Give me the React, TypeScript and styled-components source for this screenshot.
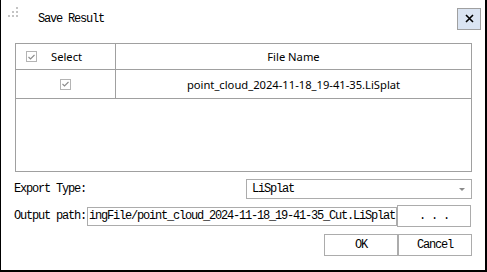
import React from 'react'
import styled, {createGlobalStyle} from 'styled-components'

const GlobalStyle = createGlobalStyle`
  html, body {
    margin: 0;
    padding: 0;
    background: #ffffff;
  }
`

const mono = `"Liberation Mono", "DejaVu Sans Mono", monospace`
const sans = `"Noto Sans", "Open Sans", Arial, sans-serif`

const Dialog = styled.div`
  box-sizing: border-box;
  width: 487px;
  height: 272px;
  background: #fff;
  border-left: 1px solid #000;
  border-right: 2px solid #000;
  border-bottom: 2px solid #000;
  display: flex;
  flex-direction: column;
  font-family: ${mono};
  font-size: 12px;
  letter-spacing: -1.2px;
  color: #000;
`

const TitleBar = styled.div`
  height: 37px;
  display: flex;
  align-items: center;
  padding: 0 4px 0 6px;
`

const Grip = styled.svg`
  width: 12px;
  height: 12px;
  margin-top: -13px;
  flex-shrink: 0;
`

const Title = styled.span`
  margin-left: 19px;
  flex: 1;
`

const CloseButton = styled.div`
  box-sizing: border-box;
  width: 24px;
  height: 22px;
  background: #dae4f2;
  border: 1px solid #a0a0a0;
  display: flex;
  align-items: center;
  justify-content: center;
`

const Body = styled.div`
  flex: 1;
  display: flex;
  flex-direction: column;
  padding: 6px 13px 0 13px;
`

const Table = styled.div`
  box-sizing: border-box;
  margin-left: 1px;
  height: 129px;
  border: 1px solid #a0a0a0;
  background: #fff;
  font-family: ${sans};
  font-size: 11.2px;
  letter-spacing: 0;
  color: #000;
`

const Row = styled.div<{$h: number}>`
  display: grid;
  grid-template-columns: 100px 1fr;
  height: ${p => p.$h}px;
  border-bottom: 1px solid #a0a0a0;
`

const Cell = styled.div<{$left?: boolean}>`
  display: flex;
  align-items: center;
  justify-content: ${p => (p.$left ? 'flex-start' : 'center')};
  padding-left: ${p => (p.$left ? '10px' : '0')};
  gap: 14px;
  border-right: 1px solid #a0a0a0;
  &:last-child {
    border-right: none;
  }
`

const Box = styled.span`
  box-sizing: border-box;
  width: 11px;
  height: 11px;
  border: 1px solid #b4b4b4;
  background: #fff;
  display: inline-flex;
  align-items: center;
  justify-content: center;
`

const FormRow = styled.div<{$mt: number}>`
  display: flex;
  align-items: center;
  margin-top: ${p => p.$mt}px;
`

const Label = styled.span`
  white-space: nowrap;
`

const Select = styled.div`
  box-sizing: border-box;
  margin-left: auto;
  width: 226px;
  height: 20px;
  border: 1px solid #acacac;
  display: flex;
  align-items: center;
  justify-content: space-between;
  padding: 0 6px 0 5px;
`

const Arrow = styled.span`
  width: 0;
  height: 0;
  border-left: 3px solid transparent;
  border-right: 3px solid transparent;
  border-top: 3px solid #8a8a8a;
`

const PathInput = styled.div`
  box-sizing: border-box;
  margin-left: 1px;
  width: 310px;
  height: 19px;
  border: 1px solid #acacac;
  display: flex;
  align-items: center;
  padding-left: 1px;
  white-space: nowrap;
  overflow: hidden;
`

const Button = styled.div`
  box-sizing: border-box;
  width: 74px;
  height: 22px;
  border: 1px solid #acacac;
  background: #fff;
  display: flex;
  align-items: center;
  justify-content: center;
`

const Buttons = styled.div`
  display: flex;
  justify-content: flex-end;
  margin-top: 7px;
`

function Check() {
  return (
    <svg width="7" height="6" viewBox="0 0 7 6">
      <path d="M0.5 3 L2.5 5 L6.5 1" fill="none" stroke="#8c8c8c" strokeWidth="1.1" />
    </svg>
  )
}

function CheckBox() {
  return (
    <Box>
      <Check />
    </Box>
  )
}

export default function App() {
  return (
    <>
      <GlobalStyle />
      <Dialog>
        <TitleBar>
          <Grip viewBox="0 0 12 12">
            {[
              [9, 1],
              [9, 5],
              [5, 5],
              [1, 9],
              [5, 9],
              [9, 9],
            ].map(([x, y], i) => (
              <rect key={i} x={x} y={y} width="2" height="2" fill="#c4c4c4" />
            ))}
          </Grip>
          <Title>Save Result</Title>
          <CloseButton>
            <svg width="9" height="9" viewBox="0 0 9 9">
              <path d="M1 1 L8 8 M8 1 L1 8" stroke="#000" strokeWidth="1.6" />
            </svg>
          </CloseButton>
        </TitleBar>
        <Body>
          <Table>
            <Row $h={25}>
              <Cell $left>
                <CheckBox />
                <span>Select</span>
              </Cell>
              <Cell>File Name</Cell>
            </Row>
            <Row $h={28}>
              <Cell>
                <CheckBox />
              </Cell>
              <Cell>point_cloud_2024-11-18_19-41-35.LiSplat</Cell>
            </Row>
          </Table>
          <FormRow $mt={7}>
            <Label>Export Type:</Label>
            <Select>
              <span>LiSplat</span>
              <Arrow />
            </Select>
          </FormRow>
          <FormRow $mt={6}>
            <Label>Output path:</Label>
            <PathInput>ingFile/point_cloud_2024-11-18_19-41-35_Cut.LiSplat</PathInput>
            <Button>. . .</Button>
          </FormRow>
          <Buttons>
            <Button>OK</Button>
            <Button>Cancel</Button>
          </Buttons>
        </Body>
      </Dialog>
    </>
  )
}
